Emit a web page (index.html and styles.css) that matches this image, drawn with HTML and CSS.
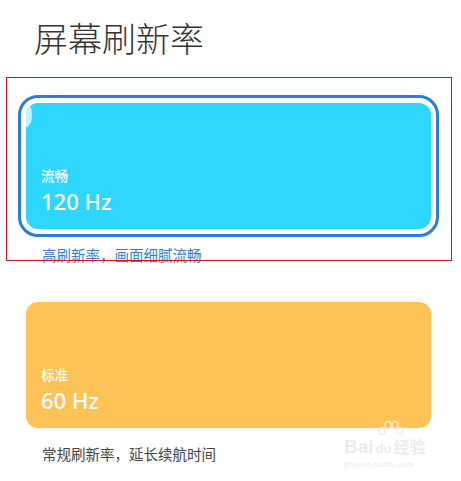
FILE: index.html
```html
<!DOCTYPE html>
<html lang="zh-CN">
<head>
  <meta charset="UTF-8" />
  <meta name="viewport" content="width=device-width, initial-scale=1" />
  <title>屏幕刷新率</title>
  <link rel="stylesheet" href="styles.css">
</head>
<body>
  <div class="page">
    <h1 class="title">屏幕刷新率</h1>

    <div class="option first">
      <div class="ring selected">
        <div class="card fast">
          <span class="card-name">流畅</span>
          <span class="card-rate">120 Hz</span>
        </div>
      </div>
      <p class="desc active">高刷新率，画面细腻流畅</p>
    </div>

    <div class="option">
      <div class="ring">
        <div class="card standard">
          <span class="card-name">标准</span>
          <span class="card-rate">60 Hz</span>
        </div>
      </div>
      <p class="desc">常规刷新率，延长续航时间</p>
    </div>

    <!-- рамка-выделение поверх скриншота -->
    <div class="highlight"></div>

    <div class="watermark">
      <svg class="paw" width="30" height="24" viewBox="0 0 30 24">
        <ellipse cx="6" cy="11" rx="3" ry="3.6" fill="none" stroke="#ebebeb" stroke-width="1.4"/>
        <ellipse cx="12" cy="5" rx="3" ry="3.6" fill="none" stroke="#ebebeb" stroke-width="1.4"/>
        <ellipse cx="19" cy="5" rx="3" ry="3.6" fill="none" stroke="#ebebeb" stroke-width="1.4"/>
        <ellipse cx="24" cy="11" rx="2.8" ry="3.4" fill="none" stroke="#ebebeb" stroke-width="1.4"/>
      </svg>
      <div class="wm-line"><span class="wm-bai">Bai</span><span class="wm-du">du</span><span class="wm-jy">经验</span></div>
      <div class="wm-url">jingyan.baidu.com</div>
    </div>
  </div>
</body>
</html>
```

FILE: styles.css
```css
* {
  box-sizing: border-box;
}

body {
  margin: 0;
  padding: 0;
  background-color: #fff;
  font-family: "Noto Sans CJK SC", "Noto Sans", sans-serif;
}

.page {
  position: relative;
  width: 461px;
  min-height: 481px;
  overflow: hidden;
}

.title {
  margin: 18px 0 0 34px;
  font-size: 34px;
  line-height: 40px;
  font-weight: 300;
  color: #333;
}

.option {
  margin-top: 29px;
  padding-left: 18px;
}

.option.first {
  margin-top: 37px;
}

.ring {
  width: 421px;
  border: 3px solid transparent;
  border-radius: 20px;
  padding: 5px;
}

.ring.selected {
  border-color: #2a7ed6;
}

.card {
  position: relative;
  height: 126px;
  border-radius: 12px;
  padding: 0 15px 15px;
  display: flex;
  flex-direction: column;
  justify-content: flex-end;
  overflow: hidden;
  color: #fff;
}

.card.fast {
  background-color: #2fd7fe;
}

.card.fast::before {
  content: "";
  position: absolute;
  left: -6px;
  top: 0;
  width: 12px;
  height: 24px;
  border-radius: 50%;
  background-color: #c8f3fd;
}

.card.standard {
  background-color: #fec356;
}

.card-name {
  font-size: 13.5px;
  line-height: 18px;
  font-weight: 500;
}

.card-rate {
  margin-top: 4px;
  font-family: "Noto Sans", "Noto Sans CJK SC", sans-serif;
  font-size: 22px;
  line-height: 26px;
  font-weight: 500;
}

.desc {
  margin: 8px 0 0 24px;
  font-size: 14.5px;
  line-height: 20px;
  color: #444;
}

.desc.active {
  color: #3a7cc9;
}

.highlight {
  position: absolute;
  left: 6px;
  top: 77px;
  width: 446px;
  height: 184px;
  border: 1px solid #c8161d;
}

.watermark {
  position: absolute;
  left: 344px;
  top: 420px;
  width: 92px;
  color: #ebebeb;
  font-family: "Liberation Sans", sans-serif;
}

.paw {
  display: block;
  margin-left: 32px;
}

.wm-line {
  margin-top: -8px;
  font-size: 19px;
  line-height: 20px;
  font-weight: bold;
  white-space: nowrap;
}

.wm-du {
  font-size: 13px;
  margin: 0 2px;
}

.wm-jy {
  font-family: "Noto Sans CJK SC", sans-serif;
  font-size: 16px;
}

.wm-url {
  font-size: 8px;
  line-height: 12px;
  letter-spacing: 0.3px;
}
```
